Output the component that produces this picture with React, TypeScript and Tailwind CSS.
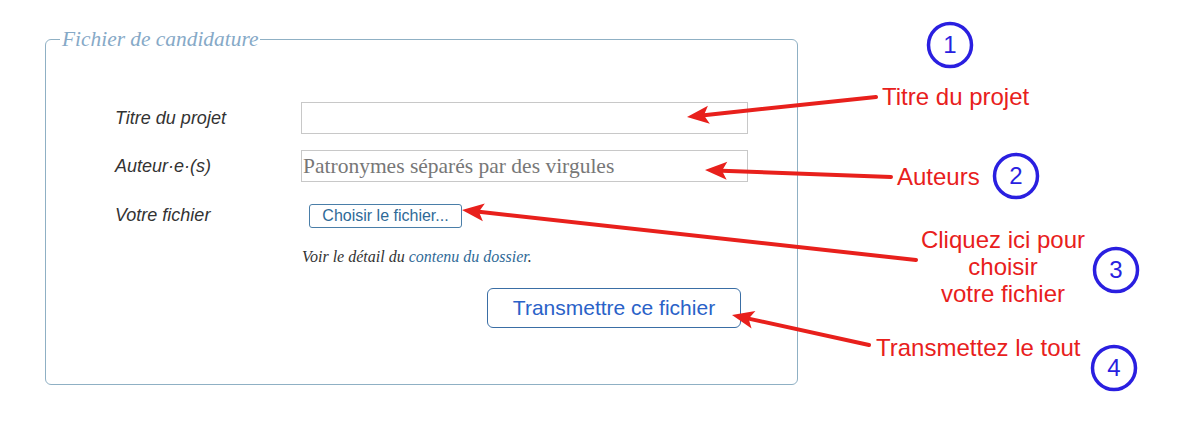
import React from "react";

type Pt = [number, number];

const arrows: { from: Pt; to: Pt }[] = [
  { from: [876, 97], to: [687, 117] },
  { from: [891, 177], to: [705, 170] },
  { from: [916, 260], to: [462, 210] },
  { from: [869, 345], to: [732, 315] },
];

const circles = [
  { cx: 950, cy: 45, n: "1" },
  { cx: 1016, cy: 176, n: "2" },
  { cx: 1116, cy: 270, n: "3" },
  { cx: 1114, cy: 368, n: "4" },
];

function Arrow({ from, to }: { from: Pt; to: Pt }) {
  const dx = from[0] - to[0];
  const dy = from[1] - to[1];
  const len = Math.hypot(dx, dy);
  const ux = dx / len;
  const uy = dy / len;
  const px = -uy;
  const py = ux;
  const headLen = 22;
  const headW = 9;
  const back: Pt = [to[0] + ux * headLen, to[1] + uy * headLen];
  const notch: Pt = [to[0] + ux * (headLen - 5), to[1] + uy * (headLen - 5)];
  const pts = [
    to,
    [back[0] + px * headW, back[1] + py * headW],
    notch,
    [back[0] - px * headW, back[1] - py * headW],
  ]
    .map((p) => p.join(","))
    .join(" ");
  return (
    <g>
      <line x1={from[0]} y1={from[1]} x2={notch[0]} y2={notch[1]} stroke="#e8201c" strokeWidth={4} strokeLinecap="round" />
      <polygon points={pts} fill="#e8201c" />
    </g>
  );
}

export default function App() {
  return (
    <div className="relative h-[424px] w-full overflow-hidden bg-white">
      <div className="pl-[45px] pt-[26px]">
        <fieldset className="h-[359px] w-[753px] rounded-[6px] border border-[#8fb0c4]">
          <legend className="ml-[14px] px-[2px] font-['Liberation_Serif',serif] text-[21.4px] italic leading-[26px] text-[#86a9c7]">
            Fichier de candidature
          </legend>

          <div className="grid grid-cols-[186px_447px] gap-y-[16px] pl-[69px] pt-[50px] font-['Liberation_Sans',Arial,sans-serif]">
            <label className="flex items-center text-[18px] italic text-[#333]">Titre du projet</label>
            <input type="text" className="h-[32px] border border-[#c8c8c8] bg-white px-[2px] outline-none" />

            <label className="flex items-center text-[18px] italic text-[#333]">Auteur·e·(s)</label>
            <input
              type="text"
              placeholder="Patronymes séparés par des virgules"
              className="h-[32px] border border-[#c8c8c8] bg-white px-[1px] font-['Liberation_Serif',serif] text-[21.5px] outline-none placeholder:text-[#777]"
            />

            <label className="flex items-center pt-[4px] text-[18px] italic text-[#333]">Votre fichier</label>
            <div className="flex pl-[8px] pt-[6px]">
              <button className="h-[24px] w-[153px] rounded-[3px] border border-[#4a7ea8] bg-white text-[16px] leading-[20px] text-[#2f6a97]">
                Choisir le fichier...
              </button>
            </div>

            <div />
            <p className="pl-[1px] pt-[2px] font-['Liberation_Serif',serif] text-[16px] italic leading-[20px] text-[#333]">
              Voir le détail du <a className="text-[#2f6a97]">contenu du dossier</a>.
            </p>

            <div />
            <div className="pl-[186px] pt-[5px]">
              <button className="h-[40px] w-[254px] rounded-[6px] border border-[#3a6ea5] bg-white text-[21px] text-[#2a62c8]">
                Transmettre ce fichier
              </button>
            </div>
          </div>
        </fieldset>
      </div>

      <svg className="pointer-events-none absolute inset-0" width="1183" height="424">
        {arrows.map((a, i) => (
          <Arrow key={i} from={a.from} to={a.to} />
        ))}
        {circles.map((c) => (
          <circle key={c.n} cx={c.cx} cy={c.cy} r={21.5} fill="none" stroke="#2a1fe0" strokeWidth={3.5} />
        ))}
      </svg>

      {circles.map((c) => (
        <div
          key={c.n}
          className="absolute flex h-[42px] w-[42px] items-center justify-center font-['Liberation_Sans',Arial,sans-serif] text-[24px] text-[#2a1fe0]"
          style={{ left: c.cx - 21, top: c.cy - 21 }}
        >
          {c.n}
        </div>
      ))}

      <div className="absolute left-[882px] top-[83px] font-['Liberation_Sans',Arial,sans-serif] text-[24px] leading-[28px] text-[#e8201c]">
        Titre du projet
      </div>
      <div className="absolute left-[897px] top-[163px] font-['Liberation_Sans',Arial,sans-serif] text-[24px] leading-[28px] text-[#e8201c]">
        Auteurs
      </div>
      <div className="absolute left-[893px] top-[226px] w-[220px] text-center font-['Liberation_Sans',Arial,sans-serif] text-[24px] leading-[27px] text-[#e8201c]">
        Cliquez ici pour
        <br />
        choisir
        <br />
        votre fichier
      </div>
      <div className="absolute left-[876px] top-[334px] font-['Liberation_Sans',Arial,sans-serif] text-[24px] leading-[28px] text-[#e8201c]">
        Transmettez le tout
      </div>
    </div>
  );
}
